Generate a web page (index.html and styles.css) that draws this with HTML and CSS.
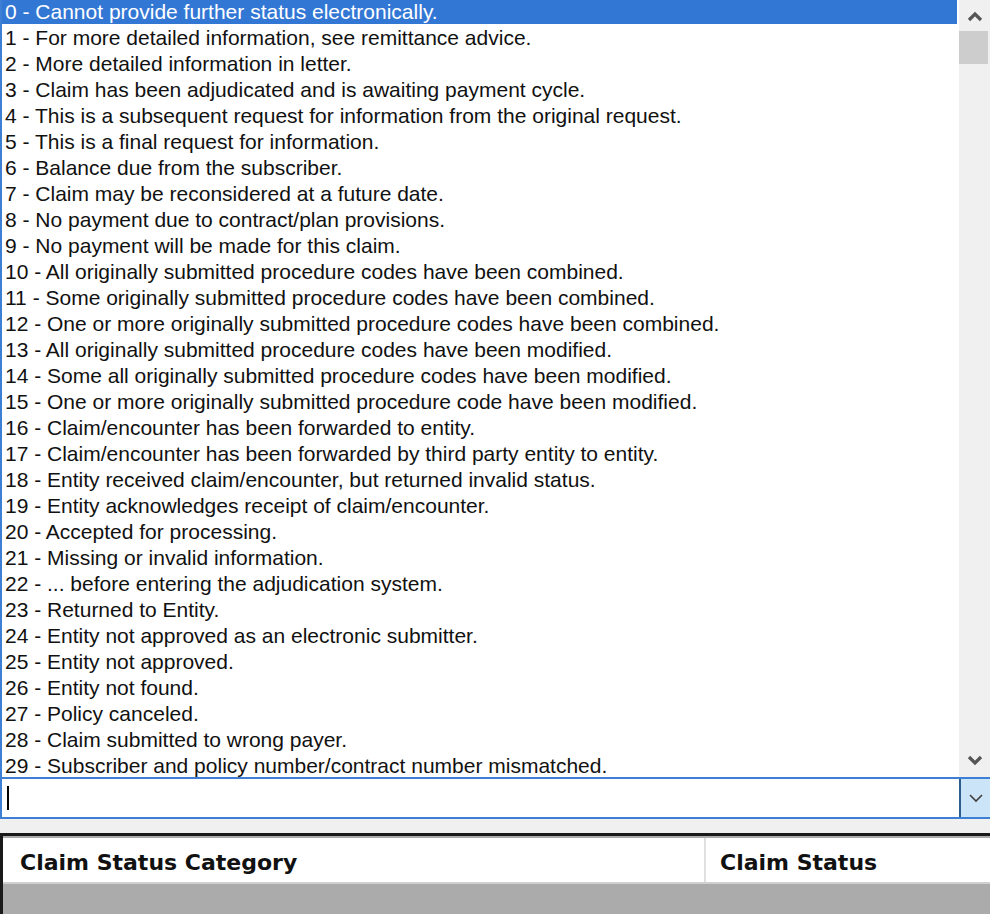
FILE: index.html
```html
<!DOCTYPE html>
<html>
<head>
<meta charset="utf-8">
<link rel="stylesheet" href="styles.css">
</head>
<body>
<div class="list">
  <div class="items">
    <div class="item sel">0 - Cannot provide further status electronically.</div>
    <div class="item">1 - For more detailed information, see remittance advice.</div>
    <div class="item">2 - More detailed information in letter.</div>
    <div class="item">3 - Claim has been adjudicated and is awaiting payment cycle.</div>
    <div class="item">4 - This is a subsequent request for information from the original request.</div>
    <div class="item">5 - This is a final request for information.</div>
    <div class="item">6 - Balance due from the subscriber.</div>
    <div class="item">7 - Claim may be reconsidered at a future date.</div>
    <div class="item">8 - No payment due to contract/plan provisions.</div>
    <div class="item">9 - No payment will be made for this claim.</div>
    <div class="item">10 - All originally submitted procedure codes have been combined.</div>
    <div class="item">11 - Some originally submitted procedure codes have been combined.</div>
    <div class="item">12 - One or more originally submitted procedure codes have been combined.</div>
    <div class="item">13 - All originally submitted procedure codes have been modified.</div>
    <div class="item">14 - Some all originally submitted procedure codes have been modified.</div>
    <div class="item">15 - One or more originally submitted procedure code have been modified.</div>
    <div class="item">16 - Claim/encounter has been forwarded to entity.</div>
    <div class="item">17 - Claim/encounter has been forwarded by third party entity to entity.</div>
    <div class="item">18 - Entity received claim/encounter, but returned invalid status.</div>
    <div class="item">19 - Entity acknowledges receipt of claim/encounter.</div>
    <div class="item">20 - Accepted for processing.</div>
    <div class="item">21 - Missing or invalid information.</div>
    <div class="item">22 - ... before entering the adjudication system.</div>
    <div class="item">23 - Returned to Entity.</div>
    <div class="item">24 - Entity not approved as an electronic submitter.</div>
    <div class="item">25 - Entity not approved.</div>
    <div class="item">26 - Entity not found.</div>
    <div class="item">27 - Policy canceled.</div>
    <div class="item">28 - Claim submitted to wrong payer.</div>
    <div class="item">29 - Subscriber and policy number/contract number mismatched.</div>
  </div>
  <div class="scrollbar">
    <div class="arrow up">
      <svg width="16" height="12" viewBox="0 0 16 12"><path d="M2 10 L8 4 L14 10" fill="none" stroke="#555" stroke-width="3.2"/></svg>
    </div>
    <div class="thumb"></div>
    <div class="track"></div>
    <div class="arrow down">
      <svg width="16" height="12" viewBox="0 0 16 12"><path d="M2 3 L8 9 L14 3" fill="none" stroke="#555" stroke-width="3.2"/></svg>
    </div>
  </div>
</div>
<div class="combo">
  <div class="field"><span class="caret"></span></div>
  <div class="dropbtn">
    <svg width="16" height="10" viewBox="0 0 16 10"><path d="M2 2 L8 8 L14 2" fill="none" stroke="#404040" stroke-width="1.6"/></svg>
  </div>
</div>
<div class="spacer"></div>
<div class="grid">
  <div class="header">
    <div class="col col1">Claim Status Category</div>
    <div class="col col2">Claim Status</div>
  </div>
</div>
</body>
</html>
```
FILE: styles.css
```css
html, body {
  margin: 0;
  padding: 0;
}
body {
  width: 990px;
  height: 914px;
  overflow: hidden;
  background: #f0f0f0;
  font-family: "Liberation Sans", Arial, sans-serif;
}
.list {
  display: flex;
  height: 777px;
  box-sizing: border-box;
  border-left: 2px solid #3c7fd4;
  background: #fff;
  overflow: hidden;
}
.items {
  flex: 1;
  min-width: 0;
}
.item {
  height: 26px;
  box-sizing: border-box;
  padding: 0 0 2px 3px;
  line-height: 24px;
  font-size: 21px;
  color: #111;
  white-space: nowrap;
}
.item.sel {
  background: #3377d5;
  background-clip: content-box;
  color: #fff;
  padding-left: 0;
  text-indent: 3px;
}
.scrollbar {
  width: 31px;
  margin-left: 2px;
  background: #f0f0f0;
  display: flex;
  flex-direction: column;
}
.arrow {
  display: flex;
  align-items: center;
  justify-content: center;
}
.arrow.up {
  height: 31px;
}
.arrow.down {
  height: 34px;
}
.thumb {
  height: 33px;
  margin: 0 2px 0 0;
  background: #cdcdcd;
}
.track {
  flex: 1;
}
.combo {
  display: flex;
  height: 42px;
  box-sizing: border-box;
  border: 2px solid #3c7fd4;
  border-right: 0;
  background: #fff;
}
.field {
  flex: 1;
  display: flex;
  align-items: center;
  padding-left: 5px;
}
.caret {
  width: 2px;
  height: 24px;
  background: #000;
}
.dropbtn {
  width: 29px;
  background: #cce4f7;
  border-left: 2px solid #2c5d8f;
  display: flex;
  align-items: center;
  justify-content: center;
}
.spacer {
  height: 14px;
}
.grid {
  height: 81px;
  box-sizing: border-box;
  border-top: 3px solid #1a1a1a;
  border-left: 3px solid #1a1a1a;
  background: #ababab;
  padding-top: 2px;
}
.header {
  display: flex;
  height: 46px;
  background: #fff;
  border-bottom: 2px solid #d0d0d0;
  box-sizing: border-box;
}
.col {
  display: flex;
  align-items: center;
  padding-top: 4px;
  font-family: "DejaVu Sans", Verdana, sans-serif;
  font-weight: bold;
  font-size: 22px;
  color: #111;
}
.col1 {
  width: 703px;
  padding-left: 17px;
  box-sizing: border-box;
  border-right: 2px solid #e0e0e0;
}
.col2 {
  padding-left: 14px;
}
```
